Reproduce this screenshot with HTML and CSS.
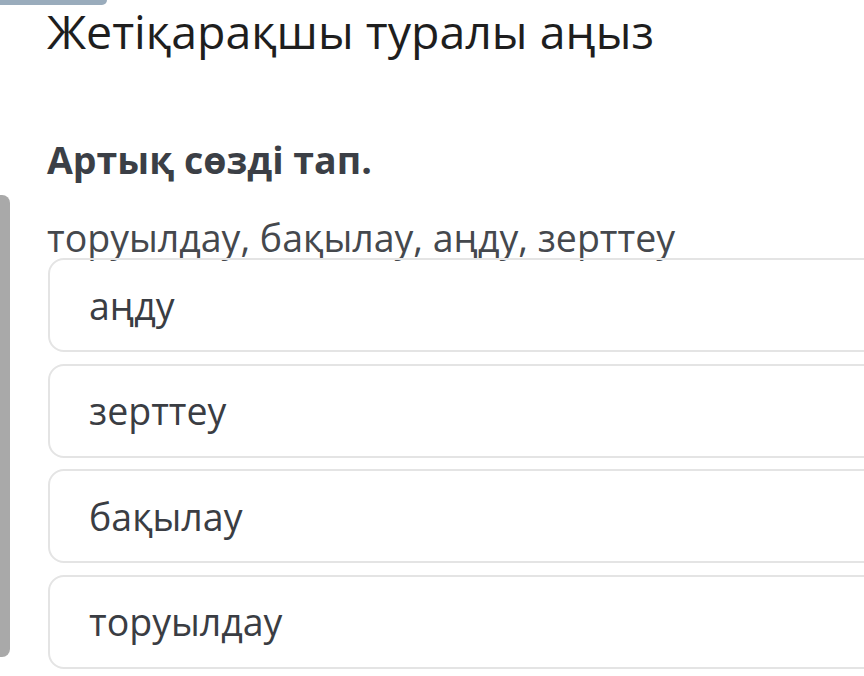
FILE: index.html
```html
<!DOCTYPE html>
<html lang="kk">
<head>
<meta charset="utf-8">
<link rel="stylesheet" href="styles.css">
</head>
<body>
<div class="page">
  <div class="topbar"></div>
  <div class="scrollbar"></div>
  <main class="content">
    <h1 class="title">Жетіқарақшы туралы аңыз</h1>
    <h2 class="question">Артық сөзді тап.</h2>
    <p class="prompt">торуылдау, бақылау, аңду, зерттеу</p>
    <div class="options">
      <div class="option">аңду</div>
      <div class="option">зерттеу</div>
      <div class="option">бақылау</div>
      <div class="option">торуылдау</div>
    </div>
  </main>
</div>
</body>
</html>
```
FILE: styles.css
```css
html, body {
  margin: 0;
  padding: 0;
  background: #ffffff;
  overflow: hidden;
}
.page {
  position: relative;
  width: 864px;
  height: 676px;
  overflow: hidden;
  font-family: "Open Sans", "Noto Sans", sans-serif;
}
.topbar {
  position: absolute;
  left: 0;
  top: 0;
  width: 107px;
  height: 5px;
  background: #9aacbc;
  border-bottom-right-radius: 6px;
}
.scrollbar {
  position: absolute;
  left: 0;
  top: 195px;
  width: 10px;
  height: 462px;
  background: #a9a9a9;
  border-radius: 0 8px 8px 0;
}
.content {
  padding-left: 47px;
}
.title {
  margin: 0;
  font-weight: 400;
  font-size: 46.5px;
  line-height: 63.4px;
  color: #1e1e1e;
}
.question {
  margin: 75px 0 0;
  font-weight: 700;
  font-size: 37.5px;
  line-height: 44px;
  color: #3b3f46;
}
.prompt {
  margin: 34px 0 0;
  font-size: 37.5px;
  line-height: 44px;
  color: #45484d;
}
.options {
  display: flex;
  flex-direction: column;
  gap: 11.67px;
  width: 900px;
  margin-left: 1px;
  margin-top: -2.4px;
}
.option {
  box-sizing: border-box;
  height: 94px;
  border: 2px solid #e4e4e4;
  border-radius: 16px;
  padding-left: 39px;
  display: flex;
  align-items: center;
  font-size: 37.5px;
  color: #3a3d43;
}
```
